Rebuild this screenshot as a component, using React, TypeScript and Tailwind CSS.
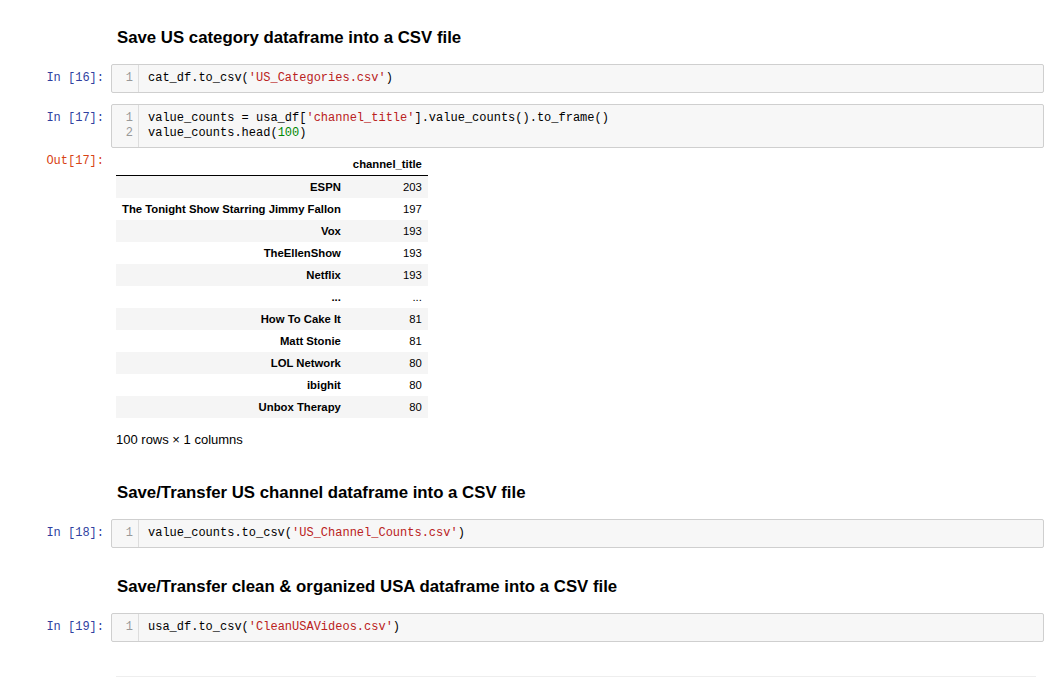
import React from 'react';

const mono = { fontFamily: '"Liberation Mono", "DejaVu Sans Mono", monospace' };

type Tok = { t: string; c?: 'str' | 'num' };

const Code: React.FC<{ lines: Tok[][] }> = ({ lines }) => (
  <div className="flex-1 mr-[7px] flex border border-[#cfcfcf] bg-[#f7f7f7] rounded-[2px]">
    <div className="w-[27px] shrink-0 border-r border-[#dddddd] py-[6px] pr-[5px] text-right text-[#999999] text-[12px] leading-[15px]" style={mono}>
      {lines.map((_, i) => (
        <div key={i}>{i + 1}</div>
      ))}
    </div>
    <div className="flex-1 py-[6px] pl-[9px] text-[12px] leading-[15px] text-black whitespace-pre" style={mono}>
      {lines.map((line, i) => (
        <div key={i}>
          {line.map((tok, j) => (
            <span key={j} className={tok.c === 'str' ? 'text-[#ba2121]' : tok.c === 'num' ? 'text-[#008800]' : ''}>
              {tok.t}
            </span>
          ))}
        </div>
      ))}
    </div>
  </div>
);

const InCell: React.FC<{ n: number; lines: Tok[][]; className?: string }> = ({ n, lines, className }) => (
  <div className={'flex ' + (className ?? '')}>
    <div className="w-[111px] shrink-0 pt-[7px] pr-[7px] text-right text-[#303f9f] text-[12px] leading-[15px] whitespace-pre" style={mono}>
      {`In [${n}]:`}
    </div>
    <Code lines={lines} />
  </div>
);

const Heading: React.FC<{ children: React.ReactNode; className?: string }> = ({ children, className }) => (
  <div className={'pl-[117px] text-[16.8px] leading-[20px] font-bold text-black ' + (className ?? '')}>{children}</div>
);

const rows: [string, string][] = [
  ['ESPN', '203'],
  ['The Tonight Show Starring Jimmy Fallon', '197'],
  ['Vox', '193'],
  ['TheEllenShow', '193'],
  ['Netflix', '193'],
  ['...', '...'],
  ['How To Cake It', '81'],
  ['Matt Stonie', '81'],
  ['LOL Network', '80'],
  ['ibighit', '80'],
  ['Unbox Therapy', '80'],
];

export default function App() {
  return (
    <div className="w-[1051px] h-[677px] overflow-hidden bg-white" style={{ fontFamily: '"Liberation Sans", Arial, sans-serif' }}>
      <Heading className="pt-[28px]">Save US category dataframe into a CSV file</Heading>

      <InCell className="mt-[16px]" n={16} lines={[[{ t: 'cat_df.to_csv(' }, { t: "'US_Categories.csv'", c: 'str' }, { t: ')' }]]} />

      <InCell
        className="mt-[11px]"
        n={17}
        lines={[
          [{ t: 'value_counts = usa_df[' }, { t: "'channel_title'", c: 'str' }, { t: '].value_counts().to_frame()' }],
          [{ t: 'value_counts.head(' }, { t: '100', c: 'num' }, { t: ')' }],
        ]}
      />

      <div className="flex mt-[5px]">
        <div className="w-[111px] shrink-0 pt-[1px] pr-[7px] text-right text-[#d84315] text-[12px] leading-[15px]" style={mono}>
          Out[17]:
        </div>
        <div className="pl-[5px]">
          <table className="border-collapse text-[11.3px] text-black">
            <thead>
              <tr className="h-[22px] leading-[22px] border-b border-black">
                <th className="px-[6px] py-0"></th>
                <th className="px-[6px] py-0 text-right font-bold">channel_title</th>
              </tr>
            </thead>
            <tbody>
              {rows.map(([name, v], i) => (
                <tr key={i} className={'h-[22px] leading-[22px] ' + (i % 2 === 0 ? 'bg-[#f5f5f5]' : 'bg-white')}>
                  <th className="px-[6px] py-0 text-right font-bold whitespace-nowrap">{name}</th>
                  <td className="px-[6px] py-0 text-right">{v}</td>
                </tr>
              ))}
            </tbody>
          </table>
          <div className="mt-[13px] text-[13px] leading-[18px] text-black">100 rows × 1 columns</div>
        </div>
      </div>

      <Heading className="mt-[34px]">Save/Transfer US channel dataframe into a CSV file</Heading>

      <InCell className="mt-[16px]" n={18} lines={[[{ t: 'value_counts.to_csv(' }, { t: "'US_Channel_Counts.csv'", c: 'str' }, { t: ')' }]]} />

      <Heading className="mt-[29px]">Save/Transfer clean &amp; organized USA dataframe into a CSV file</Heading>

      <InCell className="mt-[16px]" n={19} lines={[[{ t: 'usa_df.to_csv(' }, { t: "'CleanUSAVideos.csv'", c: 'str' }, { t: ')' }]]} />

      <div className="mt-[34px] ml-[116px] mr-[15px] border-t border-[#eeeeee]"></div>
    </div>
  );
}
